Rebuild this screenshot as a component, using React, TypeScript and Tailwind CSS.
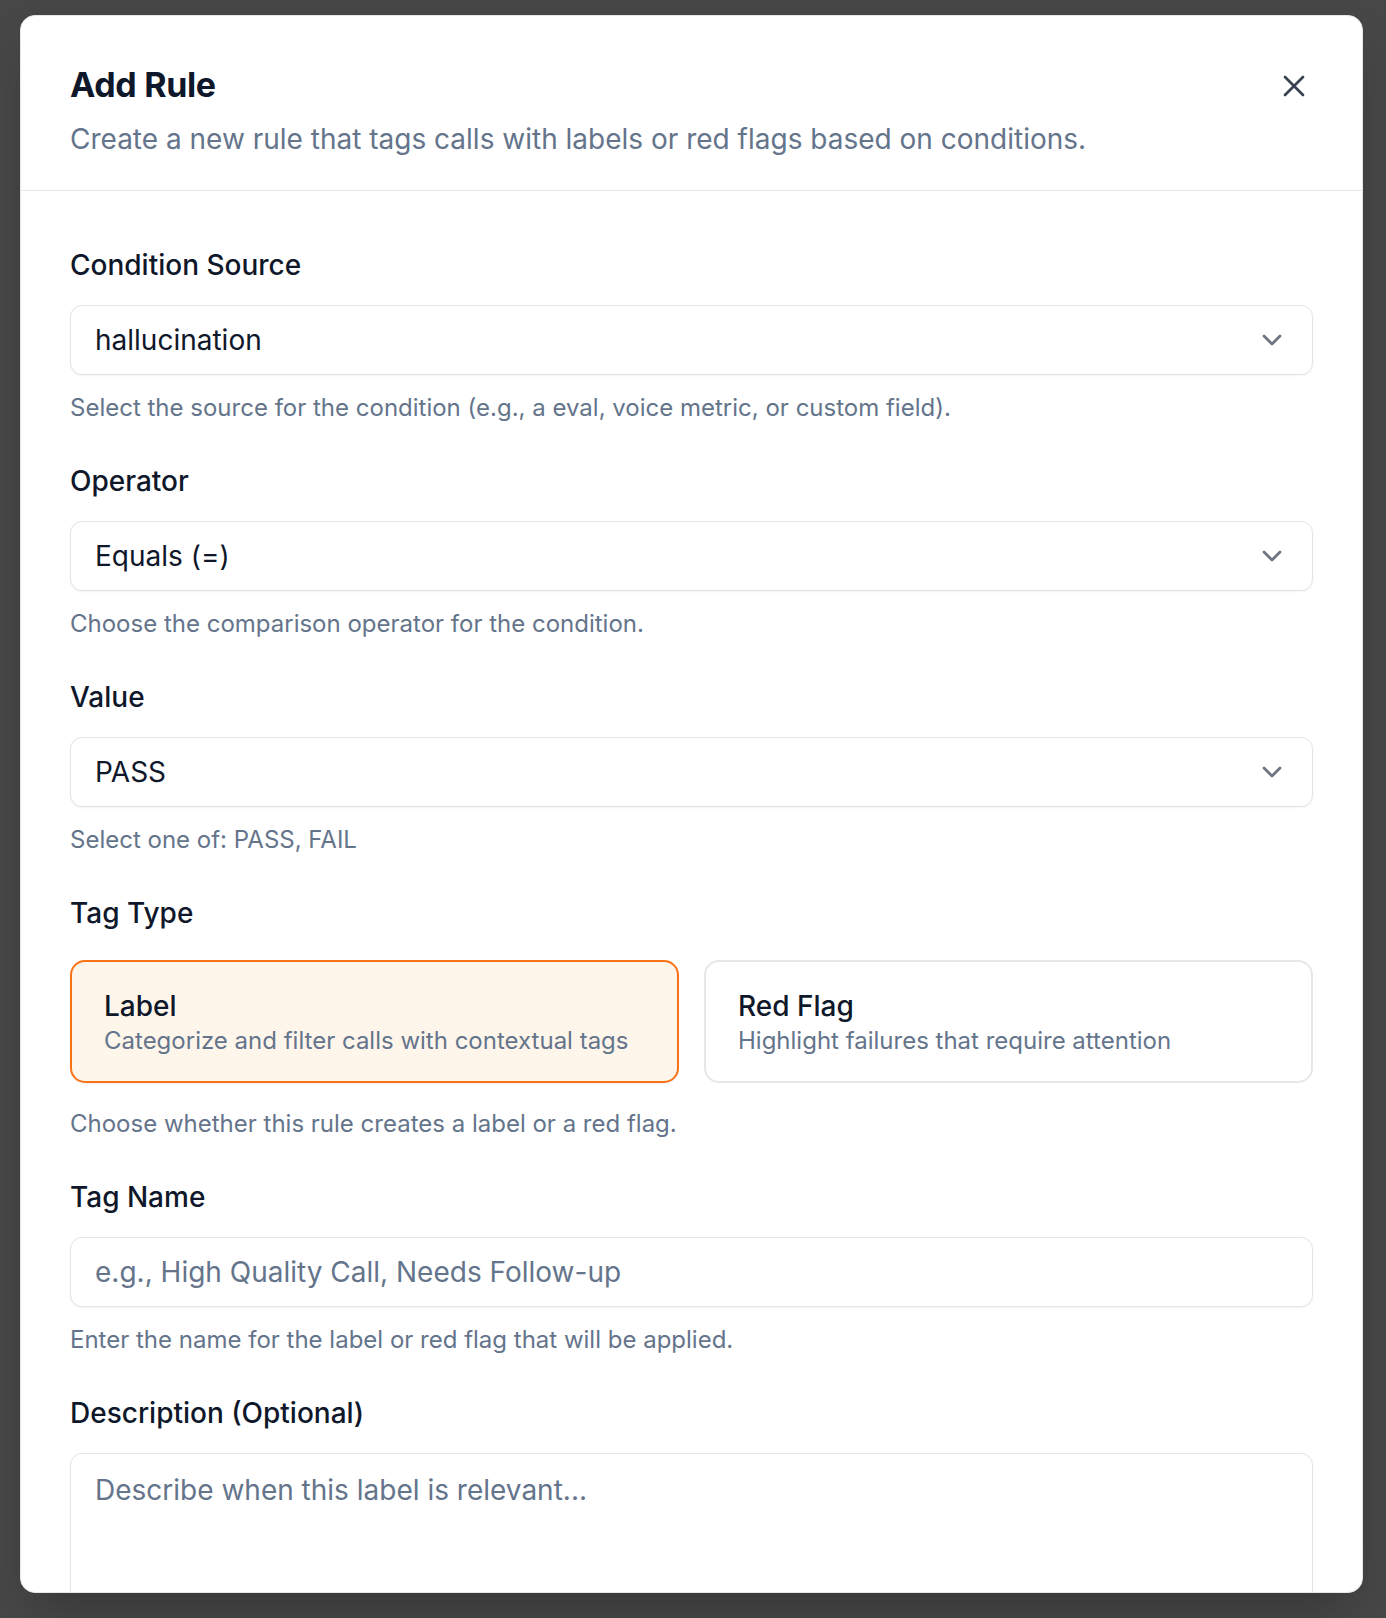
import React from "react";

function Chevron() {
  return (
    <svg width="32" height="32" viewBox="0 0 24 24" fill="none" stroke="currentColor" strokeWidth="2" strokeLinecap="round" strokeLinejoin="round" className="text-[#6b7280] shrink-0">
      <path d="m6 9 6 6 6-6" />
    </svg>
  );
}

function SelectBox({ value }: { value: string }) {
  return (
    <div className="h-[70px] w-full rounded-[12px] border border-[#e2e4ea] bg-white shadow-[0_1px_2px_rgba(0,0,0,0.05)] flex items-center justify-between pl-[24px] pr-[24px]">
      <span className="text-[28px] text-[#0f172a]">{value}</span>
      <Chevron />
    </div>
  );
}

function Label({ children }: { children: React.ReactNode }) {
  return <div className="text-[28px] leading-[36px] font-medium text-[#0f172a]">{children}</div>;
}

function Helper({ children }: { children: React.ReactNode }) {
  return <div className="text-[24px] leading-[30px] text-[#64748b]">{children}</div>;
}

function Field({ label, value, helper }: { label: string; value: string; helper: string }) {
  return (
    <div className="flex flex-col">
      <Label>{label}</Label>
      <div className="mt-[22px]">
        <SelectBox value={value} />
      </div>
      <div className="mt-[18px]">
        <Helper>{helper}</Helper>
      </div>
    </div>
  );
}

export default function App() {
  return (
    <div className="w-[1386px] h-[1618px] bg-[#474747] pt-[15px] pl-[20px] overflow-hidden font-['Inter','Noto_Sans',sans-serif]">
      <div className="w-[1343px] h-[1578px] rounded-[15px] bg-white border border-[#e5e7eb] shadow-2xl overflow-hidden flex flex-col">
        {/* Header */}
        <div className="relative shrink-0 border-b border-[#e5e7eb] px-[49px] pt-[49px] pb-[33px]">
          <div className="text-[34px] leading-[40px] font-bold tracking-[-0.01em] text-[#0f172a]">Add Rule</div>
          <div className="mt-[16px] text-[28px] leading-[36px] text-[#64748b]">
            Create a new rule that tags calls with labels or red flags based on conditions.
          </div>
          <button className="absolute right-[50px] top-[52px] text-[#374151]">
            <svg width="36" height="36" viewBox="0 0 24 24" fill="none" stroke="currentColor" strokeWidth="1.8" strokeLinecap="round" strokeLinejoin="round">
              <path d="M18 6 6 18" />
              <path d="m6 6 12 12" />
            </svg>
          </button>
        </div>

        {/* Body */}
        <div className="flex-1 overflow-hidden px-[49px] pt-[56px] flex flex-col gap-[40px]">
          <Field
            label="Condition Source"
            value="hallucination"
            helper="Select the source for the condition (e.g., a eval, voice metric, or custom field)."
          />
          <Field label="Operator" value="Equals (=)" helper="Choose the comparison operator for the condition." />
          <Field label="Value" value="PASS" helper="Select one of: PASS, FAIL" />

          <div className="flex flex-col">
            <Label>Tag Type</Label>
            <div className="mt-[29px] grid grid-cols-2 gap-[25px]">
              <div className="rounded-[15px] border-2 border-[#f97316] bg-[#fff6eb] px-[32px] pt-[26px] pb-[25px] shadow-[0_1px_2px_rgba(0,0,0,0.05)]">
                <div className="text-[28px] leading-[36px] font-medium text-[#0f172a]">Label</div>
                <div className="mt-[2px] text-[24px] leading-[30px] text-[#64748b]">
                  Categorize and filter calls with contextual tags
                </div>
              </div>
              <div className="rounded-[15px] border-2 border-[#e5e7eb] bg-white px-[32px] pt-[26px] pb-[25px]">
                <div className="text-[28px] leading-[36px] font-medium text-[#0f172a]">Red Flag</div>
                <div className="mt-[2px] text-[24px] leading-[30px] text-[#64748b]">
                  Highlight failures that require attention
                </div>
              </div>
            </div>
            <div className="mt-[26px]">
              <Helper>Choose whether this rule creates a label or a red flag.</Helper>
            </div>
          </div>

          <div className="flex flex-col">
            <Label>Tag Name</Label>
            <div className="mt-[22px] h-[70px] w-full rounded-[12px] border border-[#e2e4ea] bg-white shadow-[0_1px_2px_rgba(0,0,0,0.05)] flex items-center pl-[24px]">
              <span className="text-[28px] text-[#64748b]">e.g., High Quality Call, Needs Follow-up</span>
            </div>
            <div className="mt-[18px]">
              <Helper>Enter the name for the label or red flag that will be applied.</Helper>
            </div>
          </div>

          <div className="flex flex-col">
            <Label>Description (Optional)</Label>
            <div className="mt-[22px] h-[200px] w-full shrink-0 rounded-[12px] border border-[#e2e4ea] bg-white shadow-[0_1px_2px_rgba(0,0,0,0.05)] pl-[24px] pt-[18px]">
              <span className="text-[28px] leading-[36px] text-[#64748b]">Describe when this label is relevant...</span>
            </div>
          </div>
        </div>
      </div>
    </div>
  );
}
